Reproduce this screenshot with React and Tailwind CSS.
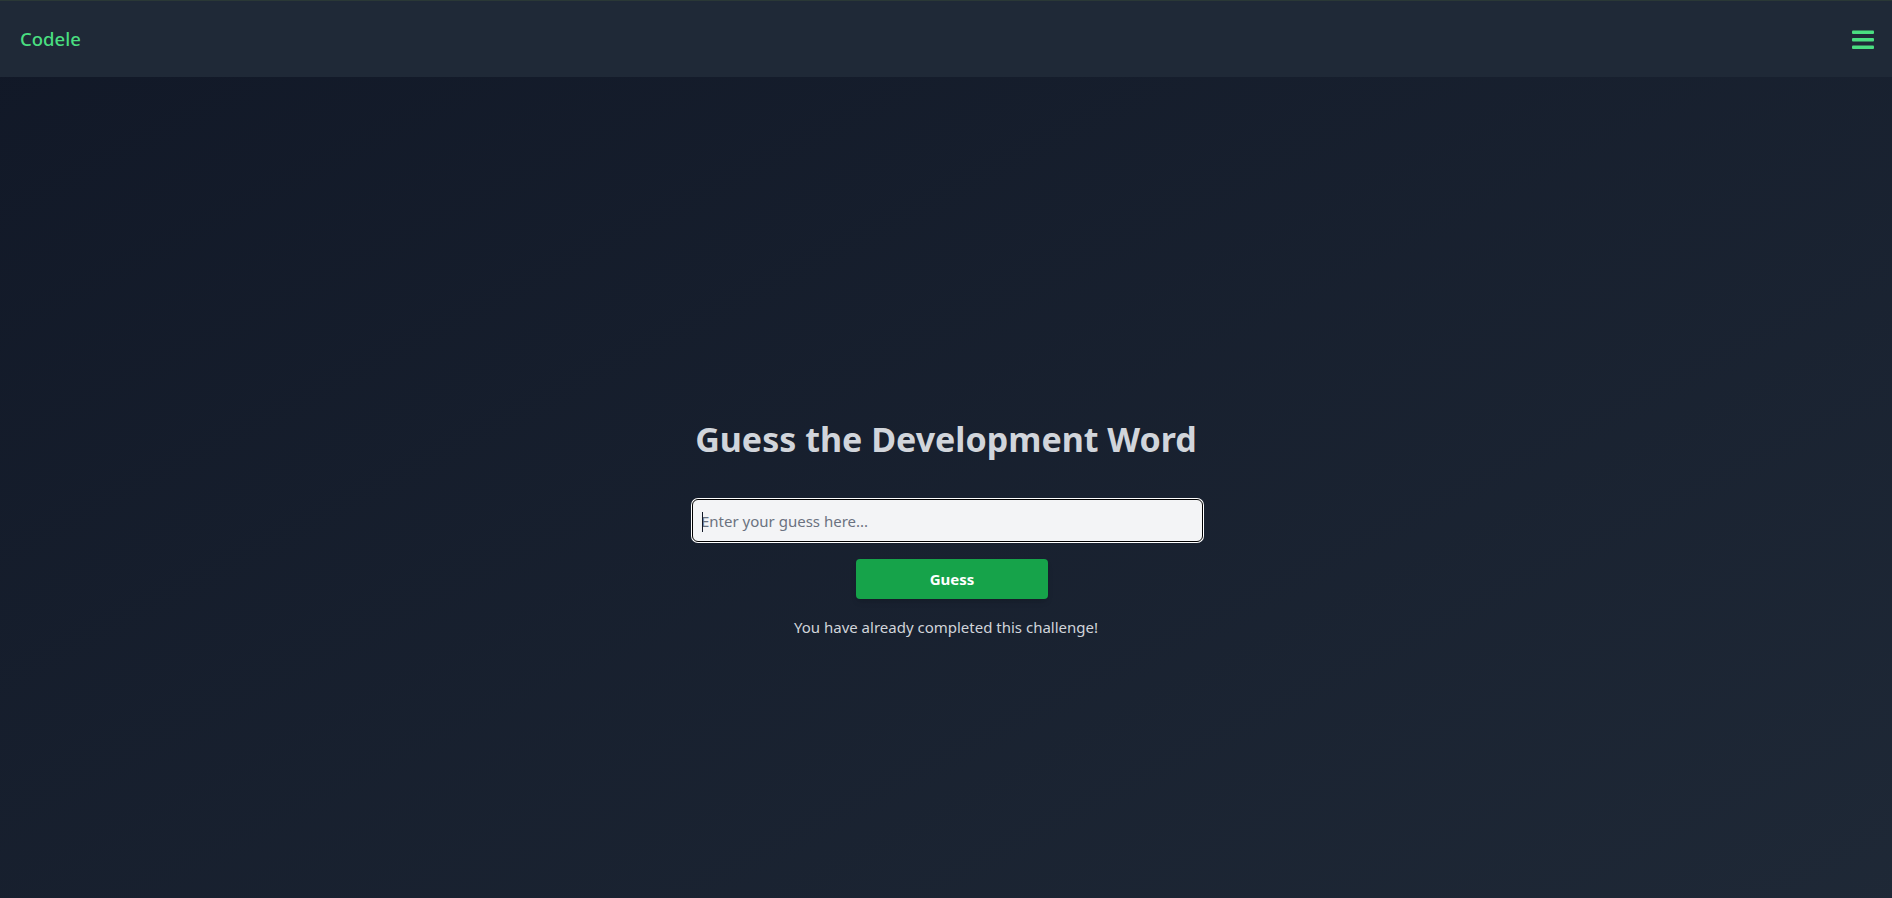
import React from "react";

export default function App() {
  return (
    <div
      className="min-h-screen bg-gradient-to-br from-[#111827] to-[#1f2937] text-[#d1d5db]"
      style={{ fontFamily: '"Noto Sans", "Open Sans", sans-serif' }}
    >
      {/* Header */}
      <header className="flex h-[77px] items-center justify-between border-t border-[#2a3836] bg-[#1f2937] pl-5 pr-[18px]">
        <a className="text-[18.5px] font-medium text-[#4ade80]">Codele</a>
        <button className="text-[#4ade80]">
          <svg width="22" height="19" viewBox="0 0 22 19" fill="currentColor">
            <rect x="0" y="0.5" width="22" height="3.5" rx="1" />
            <rect x="0" y="8" width="22" height="3.5" rx="1" />
            <rect x="0" y="15.5" width="22" height="3.5" rx="1" />
          </svg>
        </button>
      </header>

      {/* Main */}
      <main className="flex min-h-screen flex-col items-center justify-center pt-[6px]">
        <h1 className="mb-[40px] text-[34px] leading-10 font-bold text-[#d1d5db]">Guess the Development Word</h1>
        <div className="relative ml-[3px] w-[511px]">
          <input
            type="text"
            placeholder="Enter your guess here..."
            className="h-[43px] w-full rounded-md border border-black bg-[#f3f4f6] px-2 text-[15px] text-[#111827] outline-none ring-1 ring-white placeholder:text-[#6b7280]"
          />
          <span className="absolute left-[10px] top-[13px] h-[20px] w-px bg-[#111827]" />
        </div>
        <button className="mt-[17px] ml-3 h-10 w-48 rounded bg-[#16a34a] text-[15px] font-bold text-white shadow-md">
          Guess
        </button>
        <p className="mt-4 text-[15px] leading-6 text-[#d1d5db]">You have already completed this challenge!</p>
      </main>
    </div>
  );
}
